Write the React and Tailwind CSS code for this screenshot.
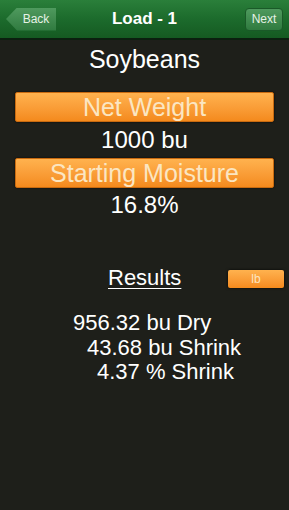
import React from 'react';

const font = { fontFamily: '"Liberation Sans", Arial, sans-serif' };

const OrangeBar = ({ label }) => (
  <div className="mx-[15px] h-[30px] rounded-[2px] border border-[#c86a10] bg-gradient-to-b from-[#ffb24e] to-[#f48a1c] flex items-center justify-center shadow-[0_0_2px_rgba(0,0,0,0.8)]">
    <span className="text-[25px] leading-none text-[#fbe6c2]">{label}</span>
  </div>
);

export default function App() {
  return (
    <div style={font} className="w-[289px] h-[510px] bg-[#1e1f1a] text-white overflow-hidden">
      {/* Nav bar */}
      <div className="relative h-[40px] bg-gradient-to-b from-[#2a7f3a] via-[#1c6b2c] to-[#155a22] border-b-2 border-[#0b1f0f] flex items-center justify-between px-[6px]">
        <button className="relative h-[23px] w-[50px] flex items-center justify-center">
          <span className="absolute inset-0 bg-gradient-to-b from-[#4f9a5e] to-[#2f7a3f] [clip-path:polygon(22%_0,100%_0,100%_100%,22%_100%,0_50%)]" />
          <span className="relative text-[12px] pl-[10px] text-[#e6f2e6]">Back</span>
        </button>
        <span className="absolute left-0 right-0 text-center text-[17px] font-bold pointer-events-none">Load - 1</span>
        <button className="h-[23px] w-[38px] rounded-[4px] bg-gradient-to-b from-[#4f9a5e] to-[#2f7a3f] border border-[#1a5a28] flex items-center justify-center">
          <span className="text-[12px] text-[#e6f2e6]">Next</span>
        </button>
      </div>

      <div className="mt-[4px] h-[30px] flex items-center justify-center text-[25px] leading-none">Soybeans</div>

      <div className="mt-[18px]">
        <OrangeBar label="Net Weight" />
      </div>
      <div className="h-[36px] flex items-center justify-center text-[24px] leading-none">1000 bu</div>
      <OrangeBar label="Starting Moisture" />
      <div className="h-[34px] flex items-center justify-center text-[24px] leading-none">16.8%</div>

      <div className="mt-[46px] h-[20px] relative flex items-center">
        <span className="ml-[108px] text-[22px] leading-none underline underline-offset-[3px] decoration-1">Results</span>
        <span className="absolute left-[228px] top-[2px] h-[18px] w-[56px] rounded-[2px] bg-gradient-to-b from-[#ffb24e] to-[#f48a1c] flex items-center justify-center text-[12px] text-[#fbe6c2] shadow-[0_0_3px_rgba(0,0,0,0.9)]">lb</span>
      </div>

      <div className="mt-[23px] flex flex-col text-[22px] leading-[24.5px]">
        <span className="pl-[73px]">956.32 bu Dry</span>
        <span className="pl-[87px]">43.68 bu Shrink</span>
        <span className="pl-[97px]">4.37 % Shrink</span>
      </div>
    </div>
  );
}
